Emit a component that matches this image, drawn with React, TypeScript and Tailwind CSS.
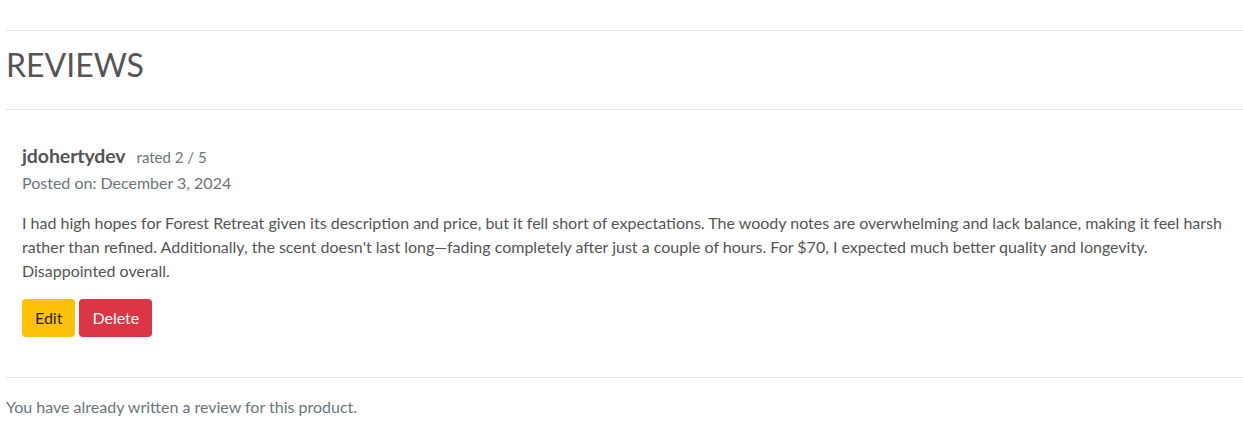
export default function App() {
  return (
    <div className="min-h-[425px] bg-white pl-[6px] pt-[30px] text-[#555555] [font-family:Lato,'Liberation_Sans',sans-serif]">
      <hr className="border-t border-[#e5e5e5]" />
      <h2 className="pt-[14px] pb-[24px] text-[32px] leading-[40px] font-normal">REVIEWS</h2>
      <hr className="border-t border-[#e5e5e5]" />
      <div className="px-4 pt-[34px] pb-[40px]">
        <div className="flex items-baseline gap-[11px]">
          <span className="text-[19.5px] leading-[24px] font-bold tracking-[-0.1px]">jdohertydev</span>
          <span className="text-[15px] text-[#6c757d]">rated 2 / 5</span>
        </div>
        <p className="mt-[2px] text-[16px] leading-[24px] text-[#6c757d]">Posted on: December 3, 2024</p>
        <p className="mt-[16px] text-[16px] leading-[24px]">
          I had high hopes for Forest Retreat given its description and price, but it fell short of expectations. The woody notes are overwhelming and lack balance, making it feel harsh rather than refined. Additionally, the scent doesn't last long—fading completely after just a couple of hours. For $70, I expected much better quality and longevity. Disappointed overall.
        </p>
        <div className="mt-[16px] flex gap-1">
          <button className="h-[38px] rounded-[4px] bg-[#ffc107] px-[13px] text-[16px] text-[#212529]">Edit</button>
          <button className="h-[38px] rounded-[4px] bg-[#dc3545] px-[13px] text-[16px] text-white">Delete</button>
        </div>
      </div>
      <hr className="border-t border-[#e5e5e5]" />
      <p className="pt-[17px] text-[16px] leading-[24px] text-[#6c757d]">You have already written a review for this product.</p>
    </div>
  );
}
